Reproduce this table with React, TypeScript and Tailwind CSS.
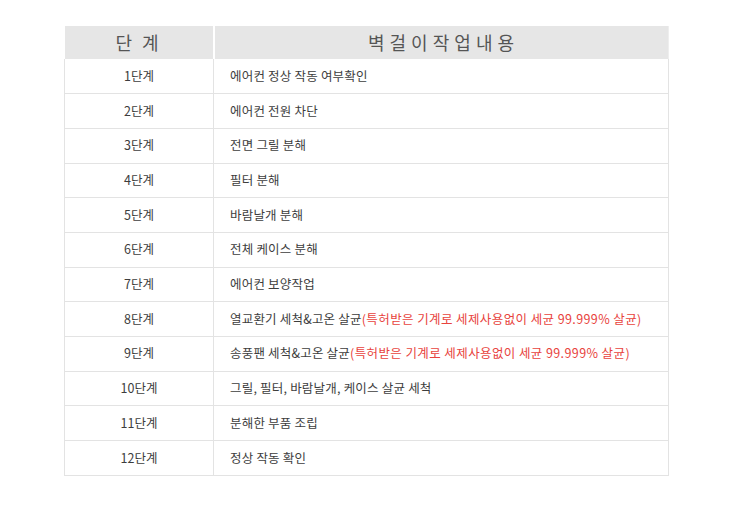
import React from 'react';

type Step = {
  label: string;
  text: string;
  note?: string;
};

const STEPS: Step[] = [
  { label: '1단계', text: '에어컨 정상 작동 여부확인' },
  { label: '2단계', text: '에어컨 전원 차단' },
  { label: '3단계', text: '전면 그릴 분해' },
  { label: '4단계', text: '필터 분해' },
  { label: '5단계', text: '바람날개 분해' },
  { label: '6단계', text: '전체 케이스 분해' },
  { label: '7단계', text: '에어컨 보양작업' },
  {
    label: '8단계',
    text: '열교환기 세척&고온 살균',
    note: '(특허받은 기계로 세제사용없이 세균 99.999% 살균)',
  },
  {
    label: '9단계',
    text: '송풍팬 세척&고온 살균',
    note: '(특허받은 기계로 세제사용없이 세균 99.999% 살균)',
  },
  { label: '10단계', text: '그릴, 필터, 바람날개, 케이스 살균 세척' },
  { label: '11단계', text: '분해한 부품 조립' },
  { label: '12단계', text: '정상 작동 확인' },
];

export default function App() {
  return (
    <div
      className="w-[730px] h-[510px] bg-white pt-[26px] pl-[64px]"
      style={{ fontFamily: '"Noto Sans CJK KR", "Noto Sans", sans-serif' }}
    >
      <table className="w-[605px] border-collapse table-fixed">
        <thead>
          <tr className="h-[33px] bg-[#e6e6e6] text-[#555] text-[18px]">
            <th className="w-[149px] font-normal tracking-[3px] border-r-2 border-white">
              단 계
            </th>
            <th className="font-normal tracking-[0.5px] border-r border-[#eeeeee]">
              벽 걸 이 작 업 내 용
            </th>
          </tr>
        </thead>
        <tbody>
          {STEPS.map((step) => (
            <tr key={step.label} className="h-[34.7px] text-[12.5px] text-[#3d3d3d]">
              <td className="text-center border border-[#e3e3e3] border-t-0">
                {step.label}
              </td>
              <td className="pl-[16px] tracking-[0.2px] border border-[#e3e3e3] border-t-0">
                {step.text}
                {step.note && (
                  <span className="text-[#e8433d] tracking-[0.4px]">{step.note}</span>
                )}
              </td>
            </tr>
          ))}
        </tbody>
      </table>
    </div>
  );
}
